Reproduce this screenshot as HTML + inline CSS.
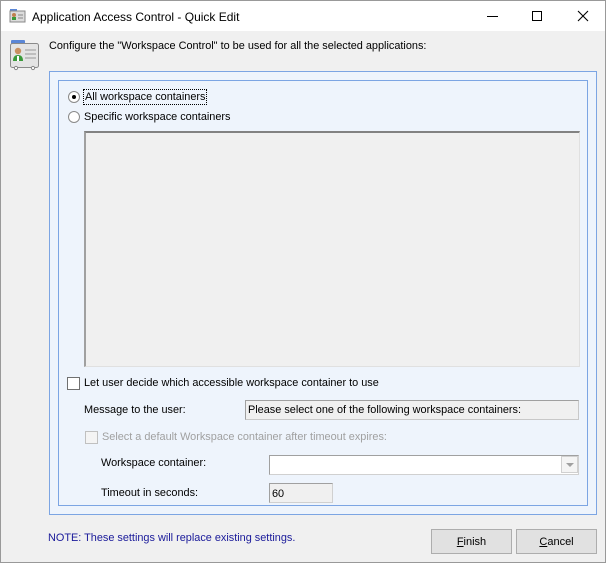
<!DOCTYPE html>
<html><head><style>
*{margin:0;padding:0;box-sizing:border-box}
body{width:606px;height:563px;background:#f0f0f0;font-family:"Liberation Sans",sans-serif;font-size:10.9px;color:#000;position:relative;overflow:hidden}
.a{position:absolute;white-space:nowrap}
#win{position:absolute;left:0;top:0;width:606px;height:563px;border:1px solid #999;border-top:none}
#title{position:absolute;left:0;top:0;width:606px;height:31px;background:#fff;border:1px solid #999;border-bottom:none}
.radio{position:absolute;width:12px;height:12px;border:1px solid #8a8a8a;border-radius:50%;background:#fff}
.chk{position:absolute;width:13px;height:13px;border:1px solid #707070;background:#fff}
.btn{position:absolute;height:25px;border:1px solid #adadad;background:#e1e1e1;text-align:center;line-height:24px;font-size:11px}
</style></head><body>
<div id="win"></div>
<div id="title">
<svg class="a" style="left:8px;top:7px" width="17" height="16" viewBox="0 0 17 16"><rect x="1" y="1" width="7" height="3" fill="#5a86d6"/><rect x="1" y="3" width="15" height="11" fill="#dcdcdc" stroke="#888"/><circle cx="5" cy="7" r="2" fill="#c08050"/><rect x="3" y="9" width="4" height="3" fill="#3a9a3a"/><line x1="9" y1="7" x2="14" y2="7" stroke="#888"/><line x1="9" y1="10" x2="14" y2="10" stroke="#888"/></svg>
<div class="a" style="left:31px;top:9px;font-size:12px">Application Access Control - Quick Edit</div>
<div class="a" style="left:486px;top:15px;width:11px;height:1px;background:#000"></div>
<div class="a" style="left:531px;top:10px;width:10px;height:10px;border:1px solid #000"></div>
<svg class="a" style="left:576px;top:9px" width="12" height="12"><path d="M1 1L11 11M11 1L1 11" stroke="#000" stroke-width="1.1"/></svg>
</div>
<svg class="a" style="left:9px;top:39px" width="32" height="32" viewBox="0 0 32 32"><rect x="2" y="1" width="14" height="5" rx="1" fill="#5a86d6"/><rect x="1.5" y="4.5" width="28" height="24" rx="2" fill="#e4e4e4" stroke="#8a8a8a"/><circle cx="9" cy="12" r="3.2" fill="#c89060"/><path d="M4 22q0-6 5-6t5 6z" fill="#3a9a3a"/><rect x="8" y="17" width="2" height="5" fill="#fff"/><line x1="16" y1="11" x2="27" y2="11" stroke="#999"/><line x1="16" y1="15" x2="27" y2="15" stroke="#999"/><line x1="16" y1="19" x2="27" y2="19" stroke="#999"/><circle cx="7" cy="29" r="1.6" fill="#fff" stroke="#888"/><circle cx="24" cy="29" r="1.6" fill="#fff" stroke="#888"/></svg>
<div class="a" style="left:49px;top:40px">Configure the "Workspace Control" to be used for all the selected applications:</div>
<div class="a" style="left:49px;top:71px;width:548px;height:444px;border:1px solid #7ca5e3;background:#eef4fc"></div>
<div class="a" style="left:58px;top:80px;width:530px;height:426px;border:1px solid #7ca5e3;background:#eef4fc"></div>
<div class="radio" style="left:68px;top:91px"><div style="position:absolute;left:3px;top:3px;width:4px;height:4px;border-radius:50%;background:#000"></div></div>
<div class="a" style="left:83px;top:89px;border:1px dotted #000;padding:0 1px;line-height:14px">All workspace containers</div>
<div class="radio" style="left:68px;top:111px"></div>
<div class="a" style="left:84px;top:111px">Specific workspace containers</div>
<div class="a" style="left:84px;top:131px;width:496px;height:236px;border:1px solid #e0e0e0;border-top:2px solid #828282;border-left:2px solid #a0a0a0;background:#f0f0f0"></div>
<div class="chk" style="left:67px;top:377px"></div>
<div class="a" style="left:84px;top:377px">Let user decide which accessible workspace container to use</div>
<div class="a" style="left:84px;top:404px">Message to the user:</div>
<div class="a" style="left:245px;top:400px;width:334px;height:20px;border:1px solid #c8c8c8;border-top-color:#a0a0a0;border-left-color:#a0a0a0;background:#f0f0f0;padding:3px 0 0 2px">Please select one of the following workspace containers:</div>
<div class="chk" style="left:85px;top:431px;border-color:#c0c0c0;background:#f4f4f4"></div>
<div class="a" style="left:102px;top:431px;color:#a0a0a0">Select a default Workspace container after timeout expires:</div>
<div class="a" style="left:101px;top:457px">Workspace container:</div>
<div class="a" style="left:269px;top:455px;width:310px;height:20px;border:1px solid #d0d0d0;border-top-color:#a0a0a0;border-left-color:#a0a0a0;background:#fff"></div>
<div class="a" style="left:561px;top:456px;width:17px;height:17px;border:1px solid #d0d0d0;background:#f4f4f4"><div style="position:absolute;left:4px;top:6px;border-left:4px solid transparent;border-right:4px solid transparent;border-top:4px solid #a0a0a0"></div></div>
<div class="a" style="left:101px;top:487px">Timeout in seconds:</div>
<div class="a" style="left:269px;top:483px;width:64px;height:20px;border:1px solid #d0d0d0;border-top-color:#a0a0a0;border-left-color:#a0a0a0;background:#f0f0f0;padding:4px 0 0 2px">60</div>
<div class="a" style="left:48px;top:532px;color:#1a1a9a">NOTE: These settings will replace existing settings.</div>
<div class="btn" style="left:431px;top:529px;width:81px"><u>F</u>inish</div>
<div class="btn" style="left:516px;top:529px;width:81px"><u>C</u>ancel</div>
</body></html>
